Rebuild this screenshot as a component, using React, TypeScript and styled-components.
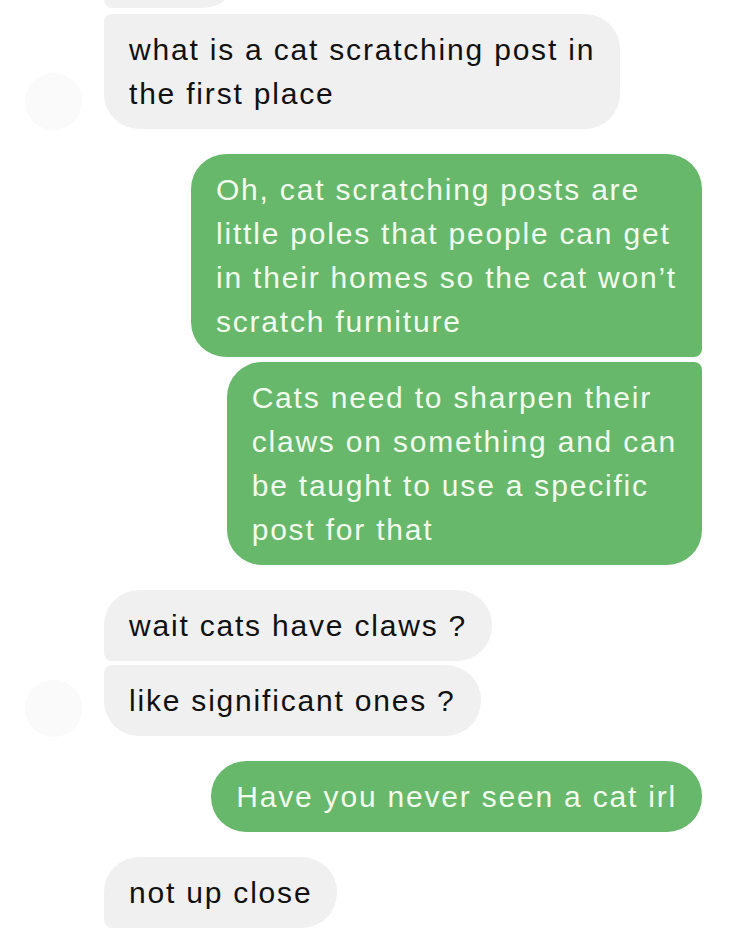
import React from "react";
import styled, { createGlobalStyle, css } from "styled-components";

const Global = createGlobalStyle`
  html, body { margin: 0; padding: 0; background: #ffffff; }
  body { font-family: "Liberation Sans", Arial, sans-serif; overflow: hidden; }
`;

const Thread = styled.div`
  width: 750px;
  height: 935px;
  overflow: hidden;
  display: flex;
  flex-direction: column;
  padding: 0 48px 0 25px;
  box-sizing: border-box;
`;

const Row = styled.div<{ $out?: boolean; $gap: number }>`
  display: flex;
  align-items: flex-end;
  justify-content: ${(p) => (p.$out ? "flex-end" : "flex-start")};
  gap: 22px;
  margin-top: ${(p) => p.$gap}px;
`;

const Avatar = styled.div<{ $show?: boolean }>`
  flex: 0 0 57px;
  width: 57px;
  height: 57px;
  border-radius: 50%;
  background: ${(p) => (p.$show ? "#fafafa" : "transparent")};
  margin-bottom: -1px;
`;

type Pos = "single" | "first" | "middle" | "last";

const Bubble = styled.div<{ $out?: boolean; $pos: Pos }>`
  font-size: 30px;
  line-height: 44px;
  letter-spacing: 1.8px;
  padding: 13.5px 25px;
  white-space: nowrap;
  border-radius: 35px;
  background: ${(p) => (p.$out ? "#67b86a" : "#f0f0f0")};
  color: ${(p) => (p.$out ? "#f1fcee" : "#111111")};
  ${(p) =>
    p.$out
      ? css`
          ${(p.$pos === "first" || p.$pos === "middle") && "border-bottom-right-radius: 8px;"}
          ${(p.$pos === "last" || p.$pos === "middle") && "border-top-right-radius: 8px;"}
        `
      : css`
          ${(p.$pos === "first" || p.$pos === "middle") && "border-bottom-left-radius: 8px;"}
          ${(p.$pos === "last" || p.$pos === "middle") && "border-top-left-radius: 8px;"}
        `}
`;

const StubBubble = styled(Bubble)`
  width: 134px;
  height: 71px;
  padding: 0;
  box-sizing: border-box;
`;

type Msg = {
  out?: boolean;
  lines: string[];
  pos: Pos;
  gap: number;
  avatar?: boolean;
  stub?: boolean;
};

const messages: Msg[] = [
  { lines: [], pos: "first", gap: -63, stub: true },
  { lines: ["what is a cat scratching post in", "the first place"], pos: "last", gap: 6, avatar: true },
  {
    out: true,
    lines: [
      "Oh, cat scratching posts are",
      "little poles that people can get",
      "in their homes so the cat won\u2019t",
      "scratch furniture",
    ],
    pos: "first",
    gap: 25,
  },
  {
    out: true,
    lines: [
      "Cats need to sharpen their",
      "claws on something and can",
      "be taught to use a specific",
      "post for that",
    ],
    pos: "last",
    gap: 5,
  },
  { lines: ["wait cats have claws ?"], pos: "first", gap: 25 },
  { lines: ["like significant ones ?"], pos: "last", gap: 4, avatar: true },
  { out: true, lines: ["Have you never seen a cat irl"], pos: "single", gap: 25 },
  { lines: ["not up close"], pos: "first", gap: 25 },
];

export default function App() {
  return (
    <>
      <Global />
      <Thread>
        {messages.map((m, i) => (
          <Row key={i} $out={m.out} $gap={m.gap}>
            {!m.out && <Avatar $show={m.avatar} />}
            {m.stub ? (
              <StubBubble $out={m.out} $pos={m.pos} />
            ) : (
              <Bubble $out={m.out} $pos={m.pos}>
                {m.lines.map((l, j) => (
                  <React.Fragment key={j}>
                    {j > 0 && <br />}
                    {l}
                  </React.Fragment>
                ))}
              </Bubble>
            )}
          </Row>
        ))}
      </Thread>
    </>
  );
}
